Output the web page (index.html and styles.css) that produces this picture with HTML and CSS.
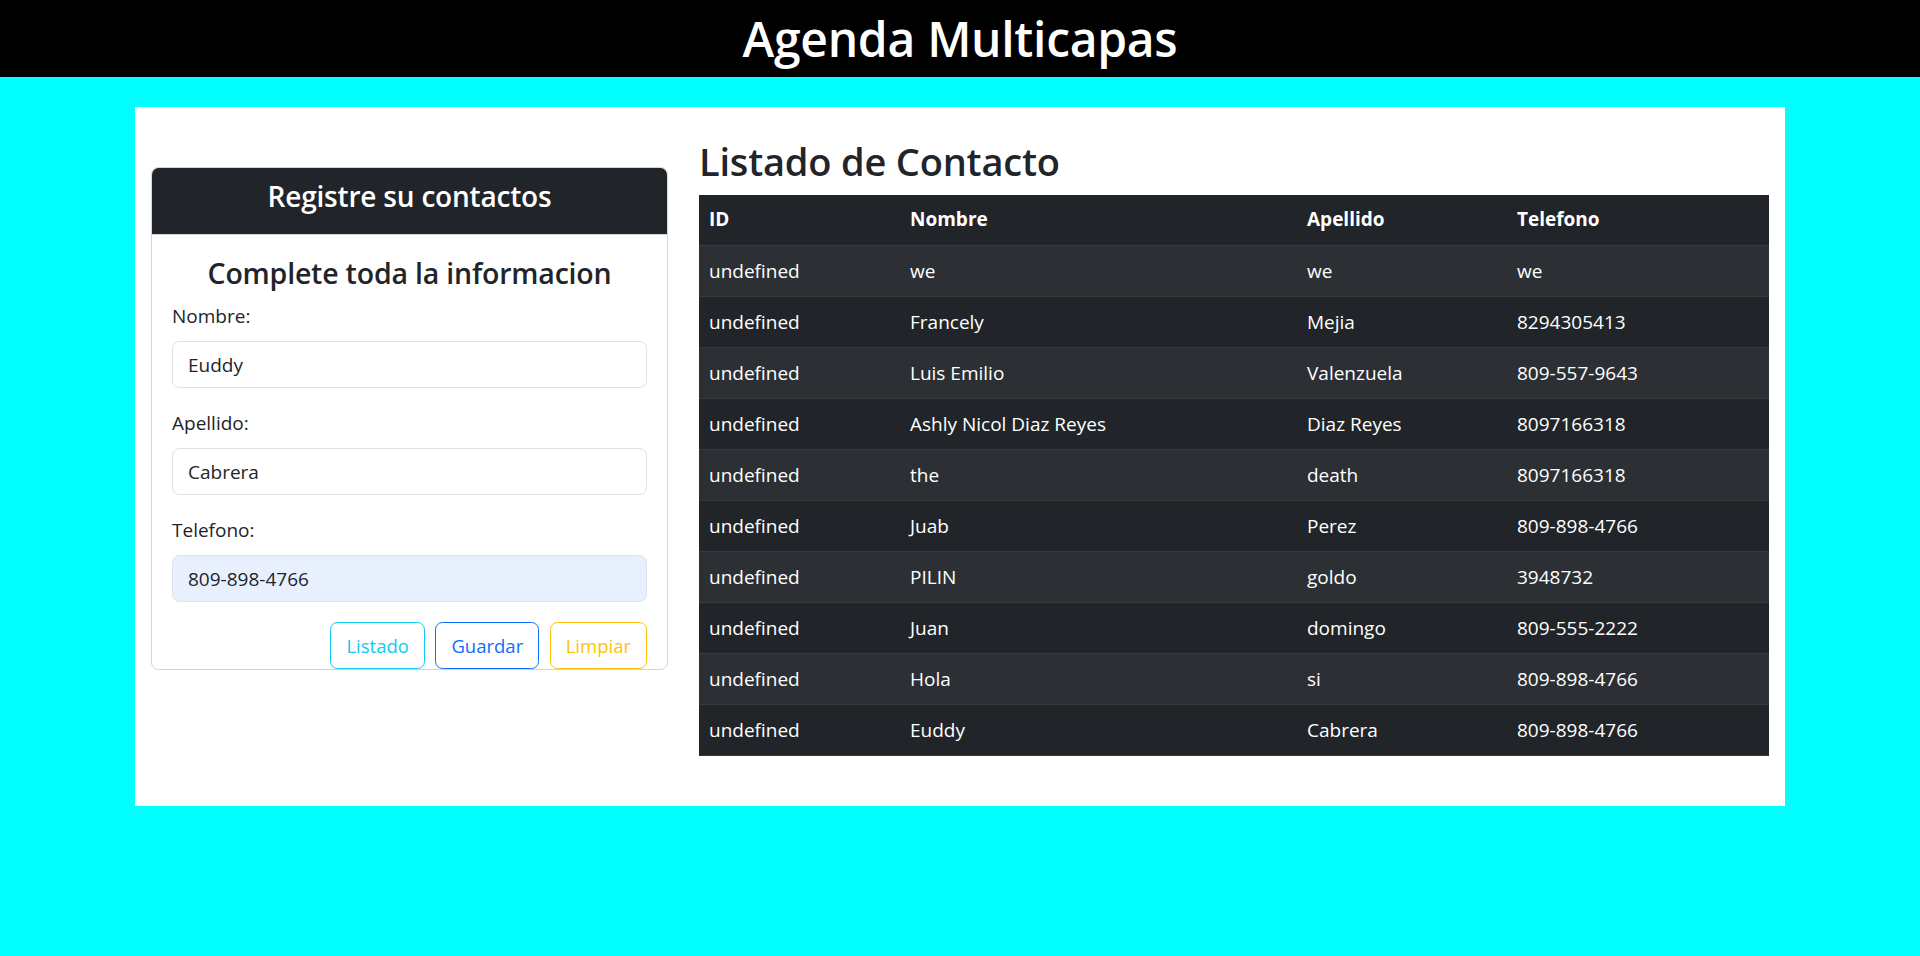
FILE: index.html
```html
<!DOCTYPE html>
<html lang="es">
<head>
<meta charset="utf-8">
<title>Agenda Multicapas</title>
<link rel="stylesheet" href="styles.css">
</head>
<body>
<header class="topbar">
  <h1 class="topbar-title">Agenda Multicapas</h1>
</header>
<main class="container">
  <section class="col-form">
    <div class="card">
      <div class="card-header">
        <h4 class="card-title">Registre su contactos</h4>
      </div>
      <div class="card-body">
        <h4 class="form-title">Complete toda la informacion</h4>
        <div class="field">
          <label class="form-label" for="nombre">Nombre:</label>
          <input class="form-control" id="nombre" type="text" value="Euddy">
        </div>
        <div class="field">
          <label class="form-label" for="apellido">Apellido:</label>
          <input class="form-control" id="apellido" type="text" value="Cabrera">
        </div>
        <div class="field">
          <label class="form-label" for="telefono">Telefono:</label>
          <input class="form-control autofilled" id="telefono" type="text" value="809-898-4766">
        </div>
        <div class="actions">
          <button class="btn btn-info" type="button">Listado</button>
          <button class="btn btn-primary" type="button">Guardar</button>
          <button class="btn btn-warning" type="button">Limpiar</button>
        </div>
      </div>
    </div>
  </section>
  <section class="col-list">
    <h2 class="list-title">Listado de Contacto</h2>
    <table class="table">
      <colgroup>
        <col class="c-id"><col class="c-nombre"><col class="c-apellido"><col class="c-tel">
      </colgroup>
      <thead>
        <tr><th>ID</th><th>Nombre</th><th>Apellido</th><th>Telefono</th></tr>
      </thead>
      <tbody>
        <tr><td>undefined</td><td>we</td><td>we</td><td>we</td></tr>
        <tr><td>undefined</td><td>Francely</td><td>Mejia</td><td>8294305413</td></tr>
        <tr><td>undefined</td><td>Luis Emilio</td><td>Valenzuela</td><td>809-557-9643</td></tr>
        <tr><td>undefined</td><td>Ashly Nicol Diaz Reyes</td><td>Diaz Reyes</td><td>8097166318</td></tr>
        <tr><td>undefined</td><td>the</td><td>death</td><td>8097166318</td></tr>
        <tr><td>undefined</td><td>Juab</td><td>Perez</td><td>809-898-4766</td></tr>
        <tr><td>undefined</td><td>PILIN</td><td>goldo</td><td>3948732</td></tr>
        <tr><td>undefined</td><td>Juan</td><td>domingo</td><td>809-555-2222</td></tr>
        <tr><td>undefined</td><td>Hola</td><td>si</td><td>809-898-4766</td></tr>
        <tr><td>undefined</td><td>Euddy</td><td>Cabrera</td><td>809-898-4766</td></tr>
      </tbody>
    </table>
  </section>
</main>
</body>
</html>
```
FILE: styles.css
```css
* { box-sizing: border-box; }

html, body {
  margin: 0;
  padding: 0;
}

body {
  background: #00ffff;
  font-family: "Open Sans", "Noto Sans", sans-serif;
  font-size: 19px;
  line-height: 30px;
  color: #212529;
  min-height: 956px;
}

.topbar {
  background: #000;
  height: 77px;
  display: flex;
  align-items: center;
  justify-content: center;
}

.topbar-title {
  margin: 0;
  color: #fff;
  font-size: 48px;
  font-weight: 600;
  line-height: 60px;
  letter-spacing: -0.3px;
}

.container {
  width: 1650px;
  margin: 30px auto 0;
  background: #fff;
  padding: 30px 0 30px;
  display: flex;
  align-items: flex-start;
}

.col-form {
  flex: 0 0 550px;
  padding: 0 17px 0 16px;
}

.col-list {
  flex: 0 0 1100px;
  padding: 0 16px 0 14px;
}

.card {
  margin-top: 30px;
  border: 1px solid #d3d4d5;
  border-radius: 7.5px;
  overflow: hidden;
}

.card-header {
  background: #212529;
  color: #fff;
  padding: 10px 20px;
  border-bottom: 1px solid #d3d4d5;
  text-align: center;
}

.card-title {
  margin: 0 0 10px;
  font-size: 28px;
  font-weight: 600;
  line-height: 36px;
  letter-spacing: -0.2px;
}

.card-body {
  padding: 20px 20px 0;
}

.form-title {
  margin: 0 0 10px;
  text-align: center;
  font-size: 28.5px;
  font-weight: 600;
  line-height: 36px;
  letter-spacing: -0.2px;
}

.field {
  margin-bottom: 20px;
}

.form-label {
  display: block;
  margin-bottom: 10px;
  line-height: 30px;
}

.form-control {
  display: block;
  width: 100%;
  height: 47px;
  padding: 7.5px 15px;
  font: inherit;
  color: #212529;
  background: #fff;
  border: 1px solid #dee2e6;
  border-radius: 7.5px;
  outline: none;
}

.form-control.autofilled {
  background: #e8f0fe;
}

.field:last-of-type {
  margin-bottom: 19px;
}

.actions {
  display: flex;
  justify-content: flex-end;
  gap: 10.5px;
}

.btn {
  height: 47px;
  padding: 7px 15px;
  font: inherit;
  font-size: 18.5px;
  background: #fff;
  border: 1px solid;
  border-radius: 7.5px;
}

.btn-info { color: #0dcaf0; border-color: #0dcaf0; }
.btn-primary { color: #0d6efd; border-color: #0d6efd; }
.btn-warning { color: #ffc107; border-color: #ffc107; }

.list-title {
  margin: 0 0 10px;
  font-size: 38px;
  font-weight: 600;
  line-height: 48px;
  letter-spacing: -0.2px;
}

.table {
  width: 1070px;
  margin-bottom: 20px;
  border-collapse: collapse;
  table-layout: fixed;
  background: #212529;
  color: #fff;
}

.c-id { width: 201px; }
.c-nombre { width: 397px; }
.c-apellido { width: 210px; }
.c-tel { width: 262px; }

.table th,
.table td {
  padding: 10px 10px;
  text-align: left;
  line-height: 30px;
  border-bottom: 1px solid #373b3e;
  white-space: nowrap;
}

.table th {
  font-weight: 700;
  line-height: 29.5px;
}

.table tbody tr:nth-child(odd) {
  background: #2c3034;
}
```
